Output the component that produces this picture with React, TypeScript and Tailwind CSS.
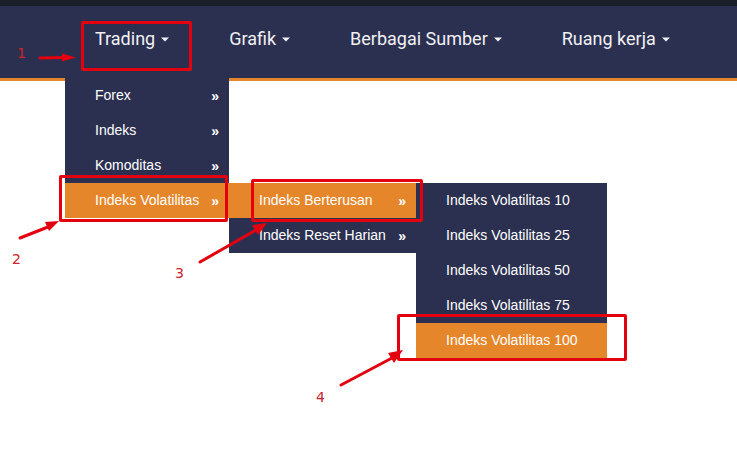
import React from "react";

type Item = { label: string; active?: boolean; more?: boolean; sub?: Item[] };

const volItems: Item[] = [
  { label: "Indeks Volatilitas 10" },
  { label: "Indeks Volatilitas 25" },
  { label: "Indeks Volatilitas 50" },
  { label: "Indeks Volatilitas 75" },
  { label: "Indeks Volatilitas 100", active: true },
];

const volSub: Item[] = [
  { label: "Indeks Berterusan", active: true, more: true, sub: volItems },
  { label: "Indeks Reset Harian", more: true },
];

const tradingMenu: Item[] = [
  { label: "Forex", more: true },
  { label: "Indeks", more: true },
  { label: "Komoditas", more: true },
  { label: "Indeks Volatilitas", active: true, more: true, sub: volSub },
];

const navItems = ["Trading", "Grafik", "Berbagai Sumber", "Ruang kerja"];

function Caret() {
  return (
    <svg width="8" height="5" viewBox="0 0 8 5" className="ml-[6px] mt-[1px]">
      <path d="M0 0.5 L8 0.5 L4 4.5 Z" fill="#f1f1f4" />
    </svg>
  );
}

function Menu({ items, width }: { items: Item[]; width: number[] }) {
  const [w, ...rest] = width;
  return (
    <ul className="bg-[#2b3050]" style={{ width: w }}>
      {items.map((it) => (
        <li
          key={it.label}
          className={
            "relative h-[35px] flex items-center justify-between pl-[30px] pr-[10px] text-[14px] text-white " +
            (it.active ? "bg-[#e6862a]" : "")
          }
        >
          <span>{it.label}</span>
          {it.more && <span className="font-bold text-[14px] leading-none">»</span>}
          {it.sub && (
            <div className="absolute left-full top-0">
              <Menu items={it.sub} width={rest} />
            </div>
          )}
        </li>
      ))}
    </ul>
  );
}

function Box({ className }: { className: string }) {
  return (
    <div
      className={
        "absolute border-[3px] border-[#e3000f] rounded-[2px] z-30 " + className
      }
    />
  );
}

export default function App() {
  return (
    <div className="relative w-[737px] h-[475px] overflow-hidden bg-white font-['Liberation_Sans',Arial,sans-serif]">
      {/* top strip */}
      <div className="h-[6px] bg-[#1b1f2b]" />

      {/* nav */}
      <nav className="h-[75px] bg-[#2b3050] border-b-[3px] border-[#e6862a]">
        <ul className="flex h-[72px] pl-[65px]">
          {navItems.map((n, i) => (
            <li
              key={n}
              className="relative h-[72px] px-[30px] pt-[22px] flex items-start z-20"
            >
              <span className="flex items-center leading-[22px] text-[18px] text-[#f1f1f4] font-['Roboto',sans-serif]">
                {n}
                <Caret />
              </span>
              {i === 0 && (
                <div className="absolute left-0 top-full">
                  <Menu items={tradingMenu} width={[164, 187, 191]} />
                </div>
              )}
            </li>
          ))}
        </ul>
      </nav>

      {/* annotation boxes */}
      <Box className="left-[81px] top-[21px] w-[111px] h-[50px]" />
      <Box className="left-[59px] top-[175px] w-[169px] h-[47px]" />
      <Box className="left-[251px] top-[179px] w-[172px] h-[43px]" />
      <Box className="left-[397px] top-[314px] w-[230px] h-[47px]" />

      {/* annotation arrows */}
      <svg
        className="absolute left-0 top-0 z-30 pointer-events-none"
        width="737"
        height="475"
      >
        <g stroke="#e3000f" strokeWidth="3" fill="#e3000f" strokeLinecap="round">
          <line x1="40" y1="58" x2="64" y2="57.5" />
          <path d="M62 53.5 L76 57.5 L62 61.5 Z" stroke="none" />
          <line x1="20" y1="238" x2="48" y2="227" />
          <path d="M45 222 L59 221 L49 231 Z" stroke="none" />
          <line x1="200" y1="262" x2="256" y2="230" />
          <path d="M252 225 L267 223 L258 235 Z" stroke="none" />
          <line x1="341" y1="385" x2="392" y2="358" />
          <path d="M388 353 L403 350 L394 363 Z" stroke="none" />
        </g>
      </svg>

      {/* annotation numbers */}
      <span className="absolute left-[17px] top-[43px] z-30 text-[14px] text-[#c9242c] font-['DejaVu_Sans',sans-serif]">
        1
      </span>
      <span className="absolute left-[12px] top-[249px] z-30 text-[14px] text-[#c9242c] font-['DejaVu_Sans',sans-serif]">
        2
      </span>
      <span className="absolute left-[175px] top-[263px] z-30 text-[14px] text-[#c9242c] font-['DejaVu_Sans',sans-serif]">
        3
      </span>
      <span className="absolute left-[316px] top-[387px] z-30 text-[14px] text-[#c9242c] font-['DejaVu_Sans',sans-serif]">
        4
      </span>
    </div>
  );
}
